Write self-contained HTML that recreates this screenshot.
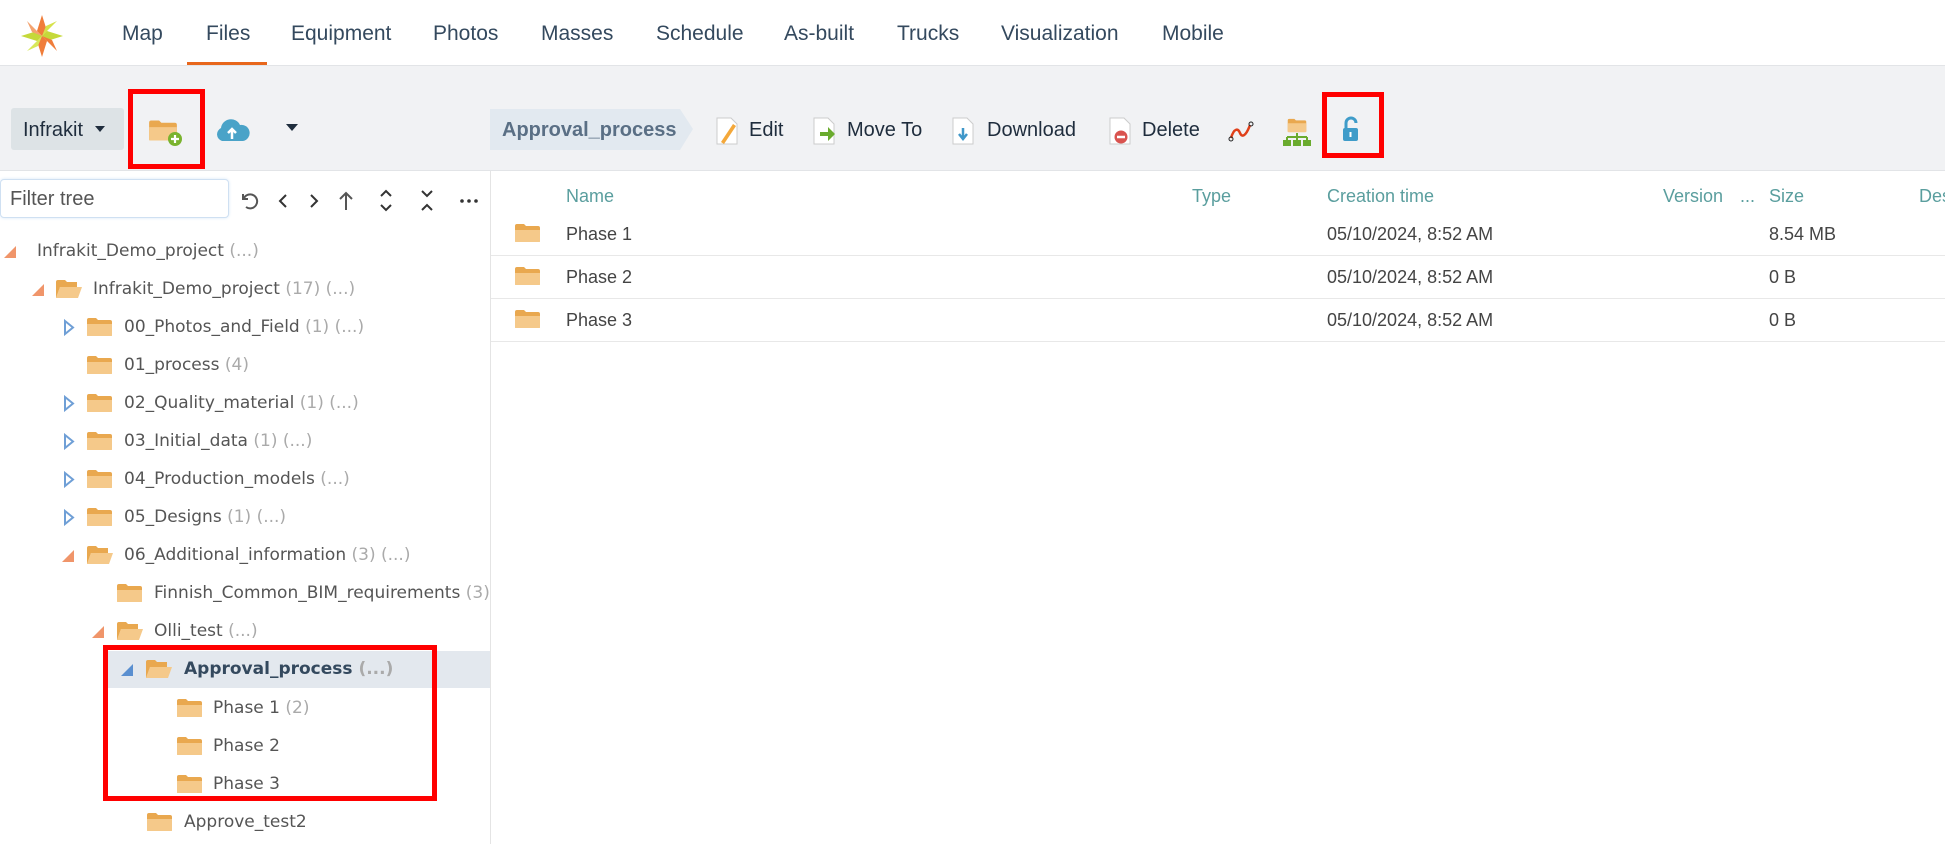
<!DOCTYPE html>
<html><head><meta charset="utf-8"><style>
*{margin:0;padding:0;box-sizing:border-box}
body{width:1945px;height:844px;overflow:hidden;background:#fff;font-family:"Liberation Sans",sans-serif;position:relative}
.a{position:absolute;white-space:nowrap}
.nav{font-size:21px;color:#34495e;top:22px}
.tb{font-size:20px;color:#1f2d3d;top:119px}
.tr{font-family:"DejaVu Sans",sans-serif;font-size:17px;color:#555;}
.tr .c{color:#aaa}
.tr .a{margin-top:1px}
.fold{position:absolute;width:27px;height:20px}
.th{font-size:18px;color:#5a9e9e;top:186px}
.td{font-size:18px;color:#444}
.line{position:absolute;left:491px;right:0;height:1px;background:#e8e8e8}
.tri{position:absolute;width:0;height:0}
</style></head><body>
<svg width="0" height="0" style="position:absolute"><defs>
<symbol id="f" viewBox="0 0 27 20"><path d="M1 3 Q1 1 3 1 H10 L12 3 H24 Q26 3 26 5 V18 Q26 19 25 19 H2 Q1 19 1 18Z" fill="#e9a84f"/><path d="M1 7 H26 V18 Q26 19 25 19 H2 Q1 19 1 18Z" fill="#f5c98a"/></symbol>
<symbol id="fo" viewBox="0 0 27 20"><path d="M1 3 Q1 1 3 1 H10 L12 3 H22 V8 H1Z" fill="#e9a84f"/><path d="M5 8 H27 L23 19 H1Z" fill="#f5c98a"/><path d="M1 3 V19 L5 8" fill="#e9a84f"/></symbol>
</defs></svg>

<!-- nav -->
<svg class="a" style="left:18px;top:12px" width="48" height="48" viewBox="0 0 48 48">
<polygon points="24,3 29,19 24,24 19,19" fill="#f07d3a"/><polygon points="45,24 29,29 24,24 29,19" fill="#c5d93a"/>
<polygon points="24,45 19,29 24,24 29,29" fill="#f07d3a"/><polygon points="3,24 19,19 24,24 19,29" fill="#c5d93a"/>
<polygon points="9,9 19,19 24,24 14,20" fill="#f4a370"/><polygon points="39,9 29,19 24,24 28,14" fill="#d6e24a"/>
<polygon points="39,39 29,29 24,24 34,28" fill="#f07d3a"/><polygon points="9,39 19,29 24,24 20,34" fill="#d8e85a"/>
</svg>
<div class="a nav" style="left:122px">Map</div>
<div class="a nav" style="left:206px">Files</div>
<div class="a nav" style="left:291px">Equipment</div>
<div class="a nav" style="left:433px">Photos</div>
<div class="a nav" style="left:541px">Masses</div>
<div class="a nav" style="left:656px">Schedule</div>
<div class="a nav" style="left:784px">As-built</div>
<div class="a nav" style="left:897px">Trucks</div>
<div class="a nav" style="left:1001px">Visualization</div>
<div class="a nav" style="left:1162px">Mobile</div>
<div class="a" style="left:187px;top:62px;width:80px;height:4px;background:#e8671c"></div>

<!-- toolbar -->
<div class="a" style="left:0;top:65px;width:1945px;height:106px;background:#f1f2f4;border-top:1px solid #e2e4e7;border-bottom:1px solid #e2e4e7"></div>
<div class="a" style="left:11px;top:108px;width:113px;height:42px;background:#dde3e6;border-radius:3px"></div>
<div class="a tb" style="left:23px">Infrakit</div>
<div class="tri" style="left:95px;top:126px;border:5px solid transparent;border-top:6px solid #1f2d3d"></div>
<svg class="a" style="left:148px;top:117px" width="36" height="30" viewBox="0 0 36 30"><use href="#f" x="0" y="2" width="30" height="23"/><circle cx="27" cy="22" r="7" fill="#7ab32e"/><path d="M27 18v8M23 22h8" stroke="#fff" stroke-width="2.2"/></svg>
<div class="a" style="left:128px;top:89px;width:77px;height:80px;border:5px solid #f00"></div>
<svg class="a" style="left:214px;top:117px" width="36" height="26" viewBox="0 0 36 26"><path d="M8 24 A7 7 0 0 1 7 11 A10 10 0 0 1 26 8 A8 8 0 0 1 29 24Z" fill="#4aa3c8"/><path d="M18 22V12M14 16l4-4 4 4" stroke="#fff" stroke-width="2.5" fill="none"/></svg>
<div class="tri" style="left:286px;top:124px;border:6px solid transparent;border-top:7px solid #1f2d3d"></div>

<svg class="a" style="left:490px;top:109px" width="204" height="41"><polygon points="0,0 190,0 203,20 190,41 0,41" fill="#e2e9f0"/></svg>
<div class="a tb" style="left:502px;color:#5a6f85;font-weight:bold">Approval_process</div>
<svg class="a" style="left:715px;top:116px" width="24" height="30"><path d="M2 2h14l6 6v20H2z" fill="#fff" stroke="#ccc"/><path d="M6 26 L18 8 l3 2 L9 28z" fill="#f4a83a"/></svg>
<div class="a tb" style="left:749px">Edit</div>
<svg class="a" style="left:812px;top:116px" width="26" height="30"><path d="M2 2h14l6 6v20H2z" fill="#fff" stroke="#ccc"/><path d="M8 16h8v-5l7 7-7 7v-5H8z" fill="#6aab2e"/></svg>
<div class="a tb" style="left:847px">Move To</div>
<svg class="a" style="left:951px;top:116px" width="24" height="30"><path d="M2 2h14l6 6v20H2z" fill="#fff" stroke="#ccc"/><path d="M12 12v10M8 18l4 5 4-5" stroke="#3f97c9" stroke-width="2.5" fill="none"/></svg>
<div class="a tb" style="left:987px">Download</div>
<svg class="a" style="left:1108px;top:116px" width="26" height="30"><path d="M2 2h14l6 6v20H2z" fill="#fff" stroke="#ccc"/><circle cx="13" cy="21" r="6.5" fill="#d9534f"/><path d="M9 21h8" stroke="#fff" stroke-width="2.5"/></svg>
<div class="a tb" style="left:1142px">Delete</div>
<svg class="a" style="left:1228px;top:120px" width="26" height="22"><path d="M3 18 C6 8 10 8 12 13 C14 18 18 16 22 5" stroke="#e0401a" stroke-width="2.5" fill="none"/><circle cx="3" cy="19" r="2" fill="none" stroke="#222"/><circle cx="23" cy="4" r="2" fill="none" stroke="#222"/></svg>
<svg class="a" style="left:1282px;top:118px" width="30" height="28"><use href="#f" x="5" y="0" width="20" height="15"/><path d="M15 15v4M5 19h20M5 19v3M15 19v3M25 19v3" stroke="#6aab2e" stroke-width="2"/><rect x="1" y="22" width="8" height="6" fill="#6aab2e"/><rect x="11" y="22" width="8" height="6" fill="#6aab2e"/><rect x="21" y="22" width="8" height="6" fill="#6aab2e"/></svg>
<svg class="a" style="left:1340px;top:115px" width="22" height="30"><path d="M6 13V8a5 5 0 0 1 10 0" stroke="#3f9cc9" stroke-width="3" fill="none"/><rect x="3" y="13" width="15" height="13" rx="2" fill="#3f9cc9"/><rect x="9.5" y="17" width="2" height="5" fill="#fff"/></svg>
<div class="a" style="left:1322px;top:92px;width:62px;height:66px;border:5px solid #f00"></div>

<!-- left panel -->
<div class="a" style="left:490px;top:171px;width:1px;height:673px;background:#e4e4e4"></div>
<div class="a" style="left:0;top:179px;width:229px;height:39px;border:1px solid #cfe0f2;border-radius:4px;background:#fff;box-shadow:0 0 3px #d8e8f8"></div>
<div class="a" style="left:10px;top:188px;font-size:20px;color:#555">Filter tree</div>
<svg class="a" style="left:238px;top:188px" width="250" height="26" fill="none" stroke="#333" stroke-width="2">
<path d="M5 6 V11 H10 M6 10 A7 7 0 1 1 8 19" stroke="#555"/>
<path d="M48 7 L42 13 L48 19"/><path d="M73 7 L79 13 L73 19"/>
<path d="M108 22 V5 M102 11 L108 5 L114 11" stroke="#555"/>
<path d="M143 8 L148 3 L153 8 M143 17 L148 22 L153 17"/>
<path d="M184 3 L189 8 L194 3 M184 22 L189 17 L194 22"/>
<circle cx="224" cy="13" r="1.8" fill="#333" stroke="none"/><circle cx="231" cy="13" r="1.8" fill="#333" stroke="none"/><circle cx="238" cy="13" r="1.8" fill="#333" stroke="none"/>
</svg>

<div class="a" style="left:103px;top:651px;width:387px;height:37px;background:#e3e8ee"></div>

<div class="tr">
<div class="tri" style="left:4px;top:246px;border-left:12px solid transparent;border-bottom:12px solid #f0956a"></div>
<div class="a" style="left:37px;top:240px">Infrakit_Demo_project <span class="c">(...)</span></div>

<div class="tri" style="left:32px;top:284px;border-left:12px solid transparent;border-bottom:12px solid #f0956a"></div>
<svg class="fold" style="left:55px;top:279px"><use href="#fo"/></svg>
<div class="a" style="left:93px;top:278px">Infrakit_Demo_project <span class="c">(17) (...)</span></div>

<svg class="a" style="left:63px;top:318px" width="12" height="17"><path d="M2 2 L10 8.5 L2 15Z" fill="none" stroke="#6f9fd6" stroke-width="2"/></svg>
<svg class="fold" style="left:86px;top:317px"><use href="#f"/></svg>
<div class="a" style="left:124px;top:316px">00_Photos_and_Field <span class="c">(1) (...)</span></div>

<svg class="fold" style="left:86px;top:355px"><use href="#f"/></svg>
<div class="a" style="left:124px;top:354px">01_process <span class="c">(4)</span></div>

<svg class="a" style="left:63px;top:394px" width="12" height="17"><path d="M2 2 L10 8.5 L2 15Z" fill="none" stroke="#6f9fd6" stroke-width="2"/></svg>
<svg class="fold" style="left:86px;top:393px"><use href="#f"/></svg>
<div class="a" style="left:124px;top:392px">02_Quality_material <span class="c">(1) (...)</span></div>

<svg class="a" style="left:63px;top:432px" width="12" height="17"><path d="M2 2 L10 8.5 L2 15Z" fill="none" stroke="#6f9fd6" stroke-width="2"/></svg>
<svg class="fold" style="left:86px;top:431px"><use href="#f"/></svg>
<div class="a" style="left:124px;top:430px">03_Initial_data <span class="c">(1) (...)</span></div>

<svg class="a" style="left:63px;top:470px" width="12" height="17"><path d="M2 2 L10 8.5 L2 15Z" fill="none" stroke="#6f9fd6" stroke-width="2"/></svg>
<svg class="fold" style="left:86px;top:469px"><use href="#f"/></svg>
<div class="a" style="left:124px;top:468px">04_Production_models <span class="c">(...)</span></div>

<svg class="a" style="left:63px;top:508px" width="12" height="17"><path d="M2 2 L10 8.5 L2 15Z" fill="none" stroke="#6f9fd6" stroke-width="2"/></svg>
<svg class="fold" style="left:86px;top:507px"><use href="#f"/></svg>
<div class="a" style="left:124px;top:506px">05_Designs <span class="c">(1) (...)</span></div>

<div class="tri" style="left:62px;top:550px;border-left:12px solid transparent;border-bottom:12px solid #f0956a"></div>
<svg class="fold" style="left:86px;top:545px"><use href="#fo"/></svg>
<div class="a" style="left:124px;top:544px">06_Additional_information <span class="c">(3) (...)</span></div>

<svg class="fold" style="left:116px;top:583px"><use href="#f"/></svg>
<div class="a" style="left:154px;top:582px">Finnish_Common_BIM_requirements <span class="c">(3)</span></div>

<div class="tri" style="left:92px;top:626px;border-left:12px solid transparent;border-bottom:12px solid #f0956a"></div>
<svg class="fold" style="left:116px;top:621px"><use href="#fo"/></svg>
<div class="a" style="left:154px;top:620px">Olli_test <span class="c">(...)</span></div>

<div class="tri" style="left:121px;top:664px;border-left:12px solid transparent;border-bottom:12px solid #5a8fd0"></div>
<svg class="fold" style="left:145px;top:659px"><use href="#fo"/></svg>
<div class="a" style="left:184px;top:658px;font-weight:bold;color:#34495e">Approval_process <span class="c">(...)</span></div>

<svg class="fold" style="left:176px;top:698px"><use href="#f"/></svg>
<div class="a" style="left:213px;top:697px">Phase 1 <span class="c">(2)</span></div>
<svg class="fold" style="left:176px;top:736px"><use href="#f"/></svg>
<div class="a" style="left:213px;top:735px">Phase 2</div>
<svg class="fold" style="left:176px;top:774px"><use href="#f"/></svg>
<div class="a" style="left:213px;top:773px">Phase 3</div>

<svg class="fold" style="left:146px;top:812px"><use href="#f"/></svg>
<div class="a" style="left:184px;top:811px">Approve_test2</div>
</div>
<div class="a" style="left:103px;top:645px;width:334px;height:156px;border:5px solid #f00"></div>

<!-- table -->
<div class="a th" style="left:566px">Name</div>
<div class="a th" style="left:1192px">Type</div>
<div class="a th" style="left:1327px">Creation time</div>
<div class="a th" style="left:1663px">Version</div>
<div class="a th" style="left:1740px">...</div>
<div class="a th" style="left:1769px">Size</div>
<div class="a th" style="left:1919px">Des</div>

<svg class="fold" style="left:514px;top:223px"><use href="#f"/></svg>
<div class="a td" style="left:566px;top:224px">Phase 1</div>
<div class="a td" style="left:1327px;top:224px">05/10/2024, 8:52 AM</div>
<div class="a td" style="left:1769px;top:224px">8.54 MB</div>
<div class="line" style="top:255px"></div>
<svg class="fold" style="left:514px;top:266px"><use href="#f"/></svg>
<div class="a td" style="left:566px;top:267px">Phase 2</div>
<div class="a td" style="left:1327px;top:267px">05/10/2024, 8:52 AM</div>
<div class="a td" style="left:1769px;top:267px">0 B</div>
<div class="line" style="top:298px"></div>
<svg class="fold" style="left:514px;top:309px"><use href="#f"/></svg>
<div class="a td" style="left:566px;top:310px">Phase 3</div>
<div class="a td" style="left:1327px;top:310px">05/10/2024, 8:52 AM</div>
<div class="a td" style="left:1769px;top:310px">0 B</div>
<div class="line" style="top:341px"></div>
</body></html>
